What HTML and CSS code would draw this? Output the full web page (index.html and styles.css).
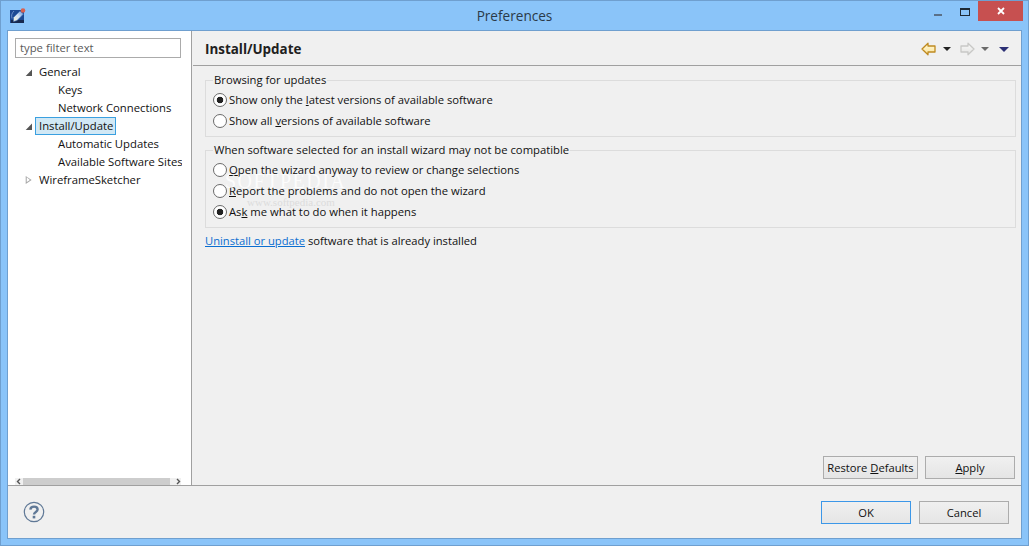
FILE: index.html
```html
<!DOCTYPE html>
<html lang="en">
<head>
<meta charset="utf-8">
<title>Preferences</title>
<link rel="stylesheet" href="styles.css">
</head>
<body>
<div class="window">
  <header class="titlebar">
    <svg class="app-icon" width="16" height="16" viewBox="0 0 16 16">
      <defs><linearGradient id="pen" x1="0" y1="1" x2="1" y2="0"><stop offset="0" stop-color="#f7f3d8"/><stop offset="0.5" stop-color="#cfe2f7"/><stop offset="1" stop-color="#5f8fd4"/></linearGradient></defs>
      <rect x="0" y="2" width="14" height="13" fill="#1c4a94"/>
      <rect x="1" y="12" width="13" height="3" fill="#16284f"/>
      <path d="M2 10.5 C1 7 2 5 4 3" fill="none" stroke="#7f9fd8" stroke-width="0.8"/>
      <path d="M3.5 13.5 L3.5 9.5 L10 3 L13.5 6 L7 12.5 Z" fill="url(#pen)" stroke="#3f6fb8" stroke-width="0.6"/>
      <circle cx="13" cy="2.5" r="2.3" fill="#d8604f"/>
    </svg>
    <div class="title">Preferences</div>
    <div class="win-buttons">
      <svg class="win-min" width="8" height="2" viewBox="0 0 8 2"><rect width="8" height="2" fill="#5a7088"/></svg>
      <svg class="win-max" width="10" height="8" viewBox="0 0 10 8"><rect x="0.5" y="0.5" width="9" height="7" fill="none" stroke="#1e2a36"/><rect x="0" y="0" width="10" height="2" fill="#1e2a36"/></svg>
      <div class="win-close">
        <svg width="8" height="8" viewBox="0 0 8 8"><path d="M1 1 L7 7 M7 1 L1 7" stroke="#fff" stroke-width="1.8"/></svg>
      </div>
    </div>
  </header>
  <div class="client">
    <div class="main">
      <aside class="sidebar">
        <div class="filter">type filter text</div>
        <ul class="tree">
          <li class="row"><span class="tw open"></span><span class="label">General</span></li>
          <li class="row child"><span class="label">Keys</span></li>
          <li class="row child"><span class="label">Network Connections</span></li>
          <li class="row"><span class="tw open"></span><span class="label selected">Install/Update</span></li>
          <li class="row child"><span class="label">Automatic Updates</span></li>
          <li class="row child"><span class="label">Available Software Sites</span></li>
          <li class="row"><span class="tw closed"></span><span class="label">WireframeSketcher</span></li>
        </ul>
        <div class="hscroll">
          <svg width="8" height="7" viewBox="0 0 8 7"><path d="M5 1 L2.5 3.5 L5 6" fill="none" stroke="#555" stroke-width="1.4"/></svg>
          <span class="thumb"></span>
          <svg width="11" height="7" viewBox="0 0 11 7"><path d="M7 1 L9.5 3.5 L7 6" fill="none" stroke="#555" stroke-width="1.4"/></svg>
        </div>
      </aside>
      <section class="page">
        <div class="page-head">
          <h1>Install/Update</h1>
          <div class="nav">
            <svg width="15" height="14" viewBox="0 0 15 14">
              <defs>
                <linearGradient id="backfill" x1="0" y1="0" x2="0" y2="1"><stop offset="0" stop-color="#fff9d8"/><stop offset="1" stop-color="#fbe39a"/></linearGradient>
                <linearGradient id="nextfill" x1="0" y1="0" x2="0" y2="1"><stop offset="0" stop-color="#fafafa"/><stop offset="1" stop-color="#e2e2e0"/></linearGradient>
              </defs>
              <path d="M1 7 L7 1.2 V4 H14 V10 H7 V12.8 Z" fill="url(#backfill)" stroke="#bf8a20" stroke-width="1.3" stroke-linejoin="round"/>
            </svg>
            <span class="drop dark"></span>
            <svg class="next" width="15" height="14" viewBox="0 0 15 14"><path d="M14 7 L8 1.2 V4 H1 V10 H8 V12.8 Z" fill="url(#nextfill)" stroke="#c8c8c6" stroke-width="1.3" stroke-linejoin="round"/></svg>
            <span class="drop grey"></span>
            <span class="drop navy"></span>
          </div>
        </div>
        <div class="page-body">
          <fieldset class="group">
            <legend>Browsing for updates</legend>
            <label class="radio on">Show only the <u>l</u>atest versions of available software</label>
            <label class="radio">Show all <u>v</u>ersions of available software</label>
          </fieldset>
          <fieldset class="group">
            <legend>When software selected for an install wizard may not be compatible</legend>
            <label class="radio"><span><u>O</u>pen the wizard anyway to review or change selections</span></label>
            <label class="radio"><span><u>R</u>eport the problems and do not open the wizard</span></label>
            <label class="radio on">As<u>k</u> me what to do when it happens</label>
          </fieldset>
          <p class="link-line"><a href="#">Uninstall or update</a> software that is already installed</p>
          <div class="page-actions">
            <button class="btn restore">Restore <u>D</u>efaults</button>
            <button class="btn apply"><u>A</u>pply</button>
          </div>
        </div>
      </section>
    </div>
    <footer class="footer">
      <svg class="help" width="22" height="22" viewBox="0 0 22 22">
        <circle cx="11" cy="11" r="9.7" fill="none" stroke="#5f7896" stroke-width="1.2"/>
        <path d="M7.4 8.6 C7.6 4.6 14.6 4.6 14.6 8.6 C14.6 11 11 10.8 11 13.4" fill="none" stroke="#5f7896" stroke-width="2.4"/>
        <rect x="9.7" y="14.8" width="2.6" height="2.6" fill="#5f7896"/>
      </svg>
      <div class="footer-actions">
        <button class="btn ok">OK</button>
        <button class="btn cancel">Cancel</button>
      </div>
    </footer>
    <div class="watermark" aria-hidden="true"><div class="wm-big">SOFTPEDIA</div><div class="wm-small">www.softpedia.com</div></div>
  </div>
</div>
</body>
</html>
```
FILE: styles.css
```css
* { box-sizing: border-box; }
html, body { margin: 0; padding: 0; }
body {
  width: 1029px; height: 546px; overflow: hidden;
  font-family: "Open Sans", "Noto Sans", sans-serif;
  font-size: 11.2px; color: #111;
}
.window {
  width: 1029px; height: 546px;
  background: #8ac4f9;
  border: 1px solid #6f9fcf;
  display: flex; flex-direction: column;
  padding: 0 6px 6px 6px;
}
.titlebar { height: 29px; flex: none; display: grid; grid-template-columns: 1fr auto 1fr; align-items: center; }
.app-icon { margin-left: 3px; }
.title { text-align: center; font-size: 13.6px; color: #2b3a48; }
.win-buttons { display: flex; align-items: flex-start; align-self: start; justify-self: end; margin-right: -1px; }
.win-min { margin: 13px 18px 0 0; }
.win-max { margin: 7px 8px 0 0; }
.win-close {
  width: 45px; height: 20px; background: #c75050;
  display: flex; align-items: center; justify-content: center;
}
.client {
  flex: 1; position: relative;
  background: #f0f0f0;
  border: 1px solid #6f9fcf;
  display: flex; flex-direction: column; min-height: 0;
}
.main { flex: 1; display: flex; min-height: 0; border-bottom: 1px solid #a0a0a0; }
.sidebar {
  width: 184px; flex: none; background: #fff;
  border-right: 1px solid #a0a0a0;
  padding: 7px 9px 0 7px;
  display: flex; flex-direction: column;
  font-size: 11.3px;
}
.filter {
  height: 20px; flex: none;
  border: 1px solid #ababab;
  padding-left: 4px; line-height: 17px; color: #5a5a5a;
  width: 166px;
}
.tree { list-style: none; margin: 5px 0 0; padding: 0; flex: 1; overflow: hidden; }
.row { height: 18px; display: flex; align-items: center; white-space: nowrap; padding-left: 10px; }
.row.child { padding-left: 43px; }
.tw { width: 7px; height: 8px; margin-right: 7px; flex: none; }
.tw.open { background: #555; clip-path: polygon(100% 20%, 100% 100%, 10% 100%); }
.tw.closed { background: #a8a8a8; clip-path: polygon(10% 0, 95% 50%, 10% 100%, 10% 85%, 70% 50%, 25% 16%, 25% 84%, 10% 90%); }
.label { line-height: 16px; padding: 0 3px 0 4px; margin-left: -4px; }
.child .label { margin-left: 0; padding: 0; }
.label.selected { background: #d1e8f5; outline: 1px solid #3aa0e0; outline-offset: -1px; height: 18px; line-height: 18px; }
.hscroll { height: 7px; flex: none; display: flex; align-items: center; background: #f0f0f0; width: 166px; }
.hscroll svg { flex: none; }
.thumb { flex: 1; height: 7px; background: #cdcdcd; }
.page { flex: 1; min-width: 0; display: flex; flex-direction: column; }
.page-head {
  height: 35px; flex: none; margin-left: 1px;
  border-bottom: 1px solid #a0a0a0;
  display: flex; align-items: center; justify-content: space-between;
  padding: 2px 12px 0 12px;
}
h1 { margin: 0; font-size: 13.4px; font-weight: 700; color: #202020; }
.nav { display: flex; align-items: center; }
.nav svg { margin-right: 6px; }
.nav .next { margin: 0 5px 0 9px; }
.drop { width: 0; height: 0; border-left: 4px solid transparent; border-right: 4px solid transparent; border-top: 4px solid #222; margin-left: 1px; }
.drop.grey { border-top-color: #6a6a6a; }
.drop.navy { border-left-width: 5px; border-right-width: 5px; border-top: 5px solid #2b2f74; margin-left: 10px; }
.page-body { flex: 1; display: flex; flex-direction: column; padding: 6px 5px 6px 13px; min-height: 0; }
.group {
  margin: 0 0 5px; padding: 1px 0 5px 7px;
  border: 1px solid #dcdcdc;
  min-width: 0;
  font-size: 11.27px;
}
legend { padding: 0 1px; line-height: 16px; color: #111; }
.radio { display: flex; align-items: center; height: 21px; white-space: pre; }
.radio u { text-decoration-thickness: 1px; }
.radio::before {
  content: ""; width: 12px; height: 12px; border-radius: 50%;
  background: #fff; border: 1px solid #6a6a6a; margin-right: 2px; flex: none;
}
.radio.on::before { background: radial-gradient(circle, #222 0 3px, #fff 3.6px); }
.link-line { margin: 0; line-height: 16px; }
.link-line a { color: #0a6ed1; }
.page-actions { margin-top: auto; margin-right: 1px; display: flex; justify-content: flex-end; gap: 7px; }
.btn {
  height: 23px; border: 1px solid #acacac; background: linear-gradient(#f0f0f0, #e5e5e5);
  font: inherit; color: #111; padding: 0; white-space: nowrap;
}
.restore { width: 95px; }
.apply { width: 90px; }
.footer { height: 52px; flex: none; display: flex; align-items: center; justify-content: space-between; padding: 0 12px 0 15px; }
.footer-actions { display: flex; gap: 8px; }
.ok { width: 90px; border-color: #3c97e8; }
.cancel { width: 90px; }
.watermark { position: absolute; left: 217px; top: 140px; color: #fff; opacity: 0.8; pointer-events: none; line-height: 1; }
.wm-big { font-size: 20px; font-family: "Liberation Serif", serif; letter-spacing: 1.5px; }
.wm-small { font-size: 11px; margin: 6px 0 0 22px; font-family: "Liberation Serif", serif; color: #d8d8d8; }
```
